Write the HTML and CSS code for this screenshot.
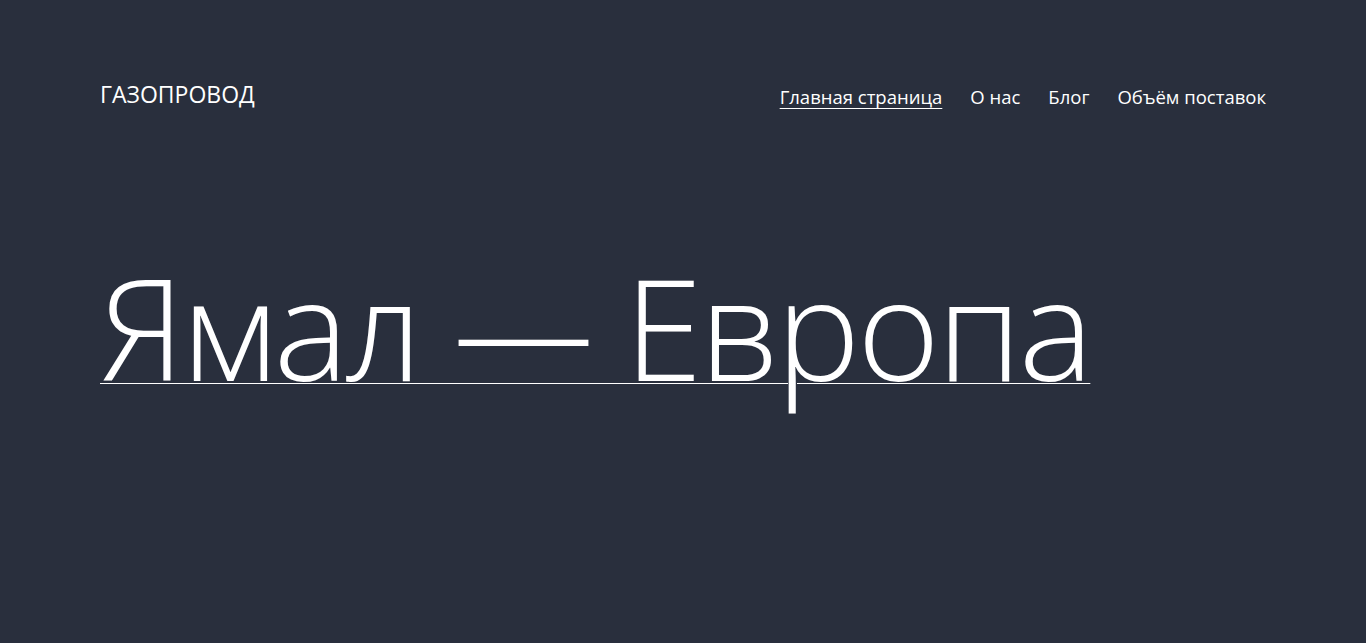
FILE: index.html
```html
<!DOCTYPE html>
<html lang="ru">
<head>
<meta charset="utf-8">
<title>Газопровод</title>
<link rel="stylesheet" href="styles.css">
</head>
<body>
<header class="header">
  <div class="logo">ГАЗОПРОВОД</div>
  <nav class="nav">
    <a class="nav-link active" href="#">Главная страница</a>
    <a class="nav-link" href="#">О нас</a>
    <a class="nav-link" href="#">Блог</a>
    <a class="nav-link" href="#">Объём поставок</a>
  </nav>
</header>
<main class="hero">
  <h1 class="title">Ямал — Европа</h1>
</main>
</body>
</html>
```
FILE: styles.css
```css
html, body {
  margin: 0;
  padding: 0;
  background: #292f3d;
  color: #ffffff;
  font-family: "Open Sans", "Noto Sans", sans-serif;
  height: 100%;
}
.header {
  display: flex;
  justify-content: space-between;
  align-items: flex-start;
  padding: 78px 100px 0 100px;
}
.logo {
  font-size: 23px;
  line-height: 32px;
  font-weight: 400;
}
.nav {
  display: flex;
  gap: 28px;
  padding-top: 6px;
}
.nav-link {
  color: #fff;
  text-decoration: none;
  font-size: 18.5px;
  line-height: 26px;
}
.nav-link.active {
  text-decoration: underline;
  text-underline-offset: 4px;
  text-decoration-thickness: 1px;
}
.hero {
  padding: 0 100px;
}
.title {
  display: inline-block;
  margin: 132px 0 0 0;
  font-size: 141px;
  font-weight: 300;
  line-height: 1.2;
  letter-spacing: -3px;
  text-decoration: underline;
  text-decoration-thickness: 1px;
  text-underline-offset: 2px;
}
```
